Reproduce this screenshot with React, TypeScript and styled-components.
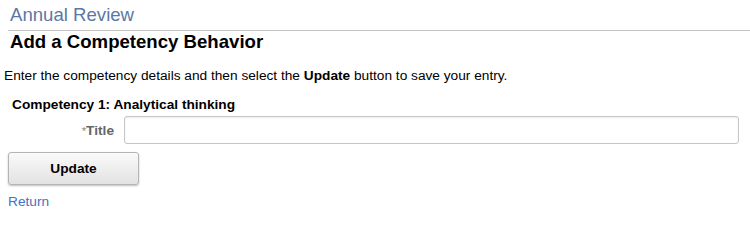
import React from "react";
import styled, { createGlobalStyle } from "styled-components";

const Global = createGlobalStyle`
  html, body { margin: 0; padding: 0; background: #fff; }
  body { font-family: Arial, "Liberation Sans", sans-serif; color: #000; }
`;

const Page = styled.div`
  width: 750px;
  height: 217px;
  overflow: hidden;
  display: flex;
  flex-direction: column;
`;

const Breadcrumb = styled.div`
  font-size: 18.6px;
  line-height: 22px;
  color: #5b78a4;
  padding: 4px 0 0 2px;
  height: 31px;
  box-sizing: border-box;
  border-bottom: 1px solid #c3c3c3;
  margin-left: 8px;
`;

const Title = styled.h1`
  margin: 0;
  font-size: 18.6px;
  font-weight: bold;
  line-height: 22px;
  padding: 0 0 0 10px;
`;

const Intro = styled.p`
  margin: 0;
  font-size: 13.7px;
  line-height: 16px;
  padding: 15px 0 0 4px;
`;

const Section = styled.h2`
  margin: 0;
  font-size: 13.7px;
  font-weight: bold;
  line-height: 16px;
  padding: 13px 0 0 12px;
`;

const FieldRow = styled.div`
  display: flex;
  align-items: center;
  margin-top: 3px;
  height: 28px;
`;

const Label = styled.label`
  width: 114px;
  text-align: right;
  font-size: 13.7px;
  font-weight: bold;
  color: #666;
  padding-right: 10px;
`;

const Req = styled.span`
  font-weight: normal;
  color: #888;
  font-size: 11.5px;
`;

const Input = styled.input`
  width: 615px;
  height: 28px;
  box-sizing: border-box;
  border: 1px solid #c6c6c6;
  border-radius: 3px;
  box-shadow: inset 0 1px 2px rgba(0,0,0,0.08);
  outline: none;
`;

const Button = styled.button`
  margin: 8px 0 0 8px;
  width: 131px;
  height: 33px;
  border: 1px solid #b4b4b4;
  border-radius: 3px;
  background: linear-gradient(#fafafa, #e2e2e2);
  box-shadow: 0 1px 2px rgba(0,0,0,0.25);
  font-family: Arial, "Liberation Sans", sans-serif;
  font-size: 13.7px;
  font-weight: bold;
  color: #000;
  cursor: pointer;
`;

const Link = styled.a`
  display: block;
  margin: 9px 0 0 8px;
  font-size: 13.7px;
  line-height: 16px;
  color: #4a6fc9;
  text-decoration: none;
`;

export default function App() {
  return (
    <>
      <Global />
      <Page>
        <Breadcrumb>Annual Review</Breadcrumb>
        <Title>Add a Competency Behavior</Title>
        <Intro>
          Enter the competency details and then select the <b>Update</b> button to save your entry.
        </Intro>
        <Section>Competency 1: Analytical thinking</Section>
        <FieldRow>
          <Label htmlFor="title"><Req>*</Req>Title</Label>
          <Input id="title" type="text" />
        </FieldRow>
        <Button>Update</Button>
        <Link href="#">Return</Link>
      </Page>
    </>
  );
}
